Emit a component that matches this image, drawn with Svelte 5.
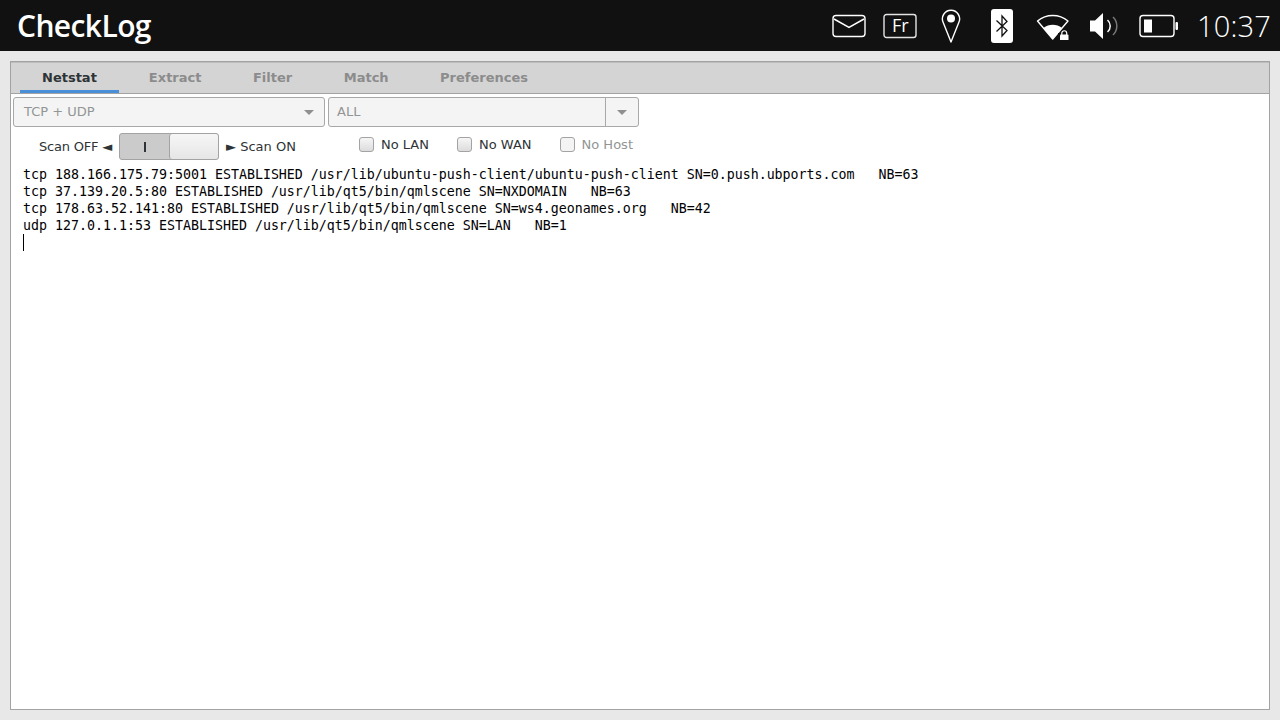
<script>
  const tabs = ["Netstat", "Extract", "Filter", "Match", "Preferences"];
  const lines = [
    "tcp 188.166.175.79:5001 ESTABLISHED /usr/lib/ubuntu-push-client/ubuntu-push-client SN=0.push.ubports.com   NB=63",
    "tcp 37.139.20.5:80 ESTABLISHED /usr/lib/qt5/bin/qmlscene SN=NXDOMAIN   NB=63",
    "tcp 178.63.52.141:80 ESTABLISHED /usr/lib/qt5/bin/qmlscene SN=ws4.geonames.org   NB=42",
    "udp 127.0.1.1:53 ESTABLISHED /usr/lib/qt5/bin/qmlscene SN=LAN   NB=1",
  ];
  const checks = [
    { label: "No LAN", disabled: false },
    { label: "No WAN", disabled: false },
    { label: "No Host", disabled: true },
  ];
</script>

<div class="screen">
  <header class="topbar">
    <span class="title">CheckLog</span>
    <div class="indicators">
      <svg class="ic-mail" width="34" height="24" viewBox="0 0 34 24" fill="none" stroke="#fff">
        <rect x="1" y="1.5" width="32" height="21" rx="3" stroke-width="1.4" />
        <path d="M2 5 L17 13.5 L32 5" stroke-width="1.5" />
      </svg>
      <svg class="ic-lang" width="34" height="26" viewBox="0 0 34 26" fill="none">
        <rect x="1" y="1.5" width="32" height="23" rx="2.5" stroke="#e4e4e4" stroke-width="1.4" />
        <text x="9" y="19" class="lang-text">Fr</text>
      </svg>
      <svg class="ic-pin" width="20" height="34" viewBox="0 0 20 34" fill="none">
        <path d="M10 33 L2.2 13.5 A8.6 8.6 0 1 1 17.8 13.5 Z" stroke="#fff" stroke-width="1.4" stroke-linejoin="round" />
        <circle cx="10" cy="9.5" r="4" fill="#fff" />
      </svg>
      <svg class="ic-bt" width="22" height="34" viewBox="0 0 22 34" fill="none">
        <rect width="22" height="34" rx="3" fill="#fff" />
        <path d="M5.5 11.5 L16 21.5 L11 27 L11 7 L16 12.5 L5.5 22.5" stroke="#111" stroke-width="1.3" />
      </svg>
      <svg class="ic-wifi" width="34" height="28" viewBox="0 0 34 28" fill="none">
        <path d="M1.5 9 A24 24 0 0 1 32 9 L16.7 27 Z" stroke="#fff" stroke-width="1.4" stroke-linejoin="round" />
        <path d="M7.5 16 A15 15 0 0 1 26 16 L16.7 27 Z" fill="#fff" />
        <rect x="22" y="21" width="12" height="8" fill="#111" />
        <rect x="24" y="22.5" width="8.5" height="6.5" rx="1" fill="#fff" />
        <path d="M25.8 23 V21.2 A2.4 2.4 0 0 1 30.7 21.2 V23" stroke="#fff" stroke-width="1.2" />
      </svg>
      <svg class="ic-vol" width="30" height="28" viewBox="0 0 30 28" fill="none">
        <path d="M0 8.5 H5 L13 1 V27 L5 19.5 H0 Z" fill="#fff" />
        <path d="M17.5 8 A8 8 0 0 1 17.5 20" stroke="#fff" stroke-width="1.5" />
        <path d="M23 5 A12.5 12.5 0 0 1 23 23" stroke="#777" stroke-width="1.5" />
      </svg>
      <svg class="ic-batt" width="40" height="24" viewBox="0 0 40 24" fill="none">
        <rect x="1" y="1.5" width="34" height="21" rx="3" stroke="#fff" stroke-width="1.4" />
        <rect x="5" y="5.5" width="8" height="13" fill="#fff" />
        <rect x="36.5" y="8" width="2.5" height="8" rx="1" fill="#fff" />
      </svg>
      <span class="clock">10:37</span>
    </div>
  </header>

  <main class="window">
    <nav class="tabs">
      {#each tabs as tab, i}
        <div class="tab" class:active={i === 0}>{tab}</div>
      {/each}
    </nav>

    <div class="combos">
      <div class="combo proto">
        <span>TCP + UDP</span>
        <i class="arrow"></i>
      </div>
      <div class="combo host">
        <span>ALL</span>
        <div class="combo-btn"><i class="arrow"></i></div>
      </div>
    </div>

    <div class="options">
      <div class="scan">
        <span class="off">Scan OFF ◄</span>
        <div class="switch">
          <div class="switch-off"><b></b></div>
          <div class="switch-thumb"></div>
        </div>
        <span>► Scan ON</span>
      </div>
      <div class="checks">
        {#each checks as c}
          <label class="check" class:disabled={c.disabled}>
            <span class="box"></span>{c.label}
          </label>
        {/each}
      </div>
    </div>

    <div class="log">
      {#each lines as line}
        <div class="line">{line}</div>
      {/each}
      <div class="line"><span class="caret"></span></div>
    </div>
  </main>
</div>

<style>
  :global(body) {
    margin: 0;
    background: #e8e8e8;
  }

  .screen {
    width: 1280px;
    height: 720px;
    display: flex;
    flex-direction: column;
    overflow: hidden;
    font-family: "DejaVu Sans", sans-serif;
    font-size: 13px;
    color: #2e3436;
  }

  .topbar {
    height: 51px;
    flex: none;
    background: #111;
    color: #fff;
    display: flex;
    align-items: center;
    justify-content: space-between;
    padding: 0 9px 0 17px;
  }

  .title {
    font-family: "Open Sans", sans-serif;
    font-size: 30px;
    font-weight: 600;
    letter-spacing: -0.6px;
  }

  .indicators {
    display: flex;
    align-items: center;
  }

  .indicators svg {
    display: block;
    flex: none;
  }

  .ic-mail { margin-right: 17px; }
  .ic-lang { margin-right: 24px; }
  .ic-pin { margin-right: 30px; }
  .ic-bt { margin-right: 23px; }
  .ic-wifi { margin-right: 20px; }
  .ic-vol { margin-right: 19px; }
  .ic-batt { margin-right: 18px; }

  .lang-text {
    font-family: "Open Sans", sans-serif;
    font-size: 18px;
    fill: #fff;
  }

  .clock {
    font-family: "Open Sans", sans-serif;
    font-size: 29px;
    font-weight: 300;
    letter-spacing: 0.2px;
  }

  .window {
    flex: 1;
    margin: 10px 10px 10px;
    background: #fff;
    border: 1px solid #a3a3a3;
    display: flex;
    flex-direction: column;
    min-height: 0;
  }

  .tabs {
    height: 31px;
    flex: none;
    background: #d4d4d4;
    border-bottom: 1px solid #a3a3a3;
    box-shadow: inset 0 1px #bdbdbd;
    display: flex;
    padding-left: 9px;
  }

  .tab {
    font-weight: 700;
    color: #8c8c8c;
    padding: 8px 22px 0;
    margin-right: 7.5px;
    box-sizing: border-box;
    height: 31px;
  }

  .tab.active {
    color: #2e3436;
    margin-right: 8px;
    border-bottom: 3px solid #4a90d9;
  }

  .combos {
    display: flex;
    gap: 3px;
    padding: 3px 0 0 2px;
  }

  .combo {
    box-sizing: border-box;
    height: 30px;
    background: #f4f4f4;
    border: 1px solid #a8a8a8;
    border-radius: 3px;
    color: #929595;
    display: flex;
    align-items: center;
    padding-left: 10px;
  }

  .combo span {
    margin-top: -1px;
  }

  .combo.proto {
    width: 312px;
    padding-right: 10px;
    justify-content: space-between;
  }

  .combo.host {
    width: 311px;
    padding-left: 8px;
    justify-content: space-between;
  }

  .combo-btn {
    width: 33px;
    height: 100%;
    border-left: 1px solid #a8a8a8;
    display: flex;
    align-items: center;
    justify-content: center;
    box-sizing: border-box;
  }

  .arrow {
    width: 0;
    height: 0;
    border-left: 5px solid transparent;
    border-right: 5px solid transparent;
    border-top: 5px solid #8f8f8f;
  }

  .options {
    display: flex;
    align-items: center;
    height: 32px;
    margin-top: 3px;
    padding-left: 28px;
  }

  .scan {
    display: flex;
    align-items: center;
    gap: 7px;
    width: 320px;
    padding-top: 1px;
  }

  .off {
    letter-spacing: -0.2px;
  }

  .switch {
    box-sizing: border-box;
    width: 100px;
    height: 27px;
    border: 1px solid #a3a3a3;
    border-radius: 3px;
    background: #cbcbcb;
    display: flex;
  }

  .switch-off {
    width: 49px;
    display: flex;
    align-items: center;
    justify-content: center;
  }

  .switch-off b {
    width: 2px;
    height: 10px;
    background: #2e3436;
  }

  .switch-thumb {
    flex: 1;
    border-left: 1px solid #a3a3a3;
    border-radius: 3px;
    background: linear-gradient(#f6f6f6, #e6e6e6);
  }

  .checks {
    display: flex;
    margin-top: -4px;
  }

  .check {
    display: flex;
    align-items: center;
    gap: 7px;
    margin-right: 28px;
  }

  .check.disabled {
    color: #929595;
  }

  .box {
    box-sizing: border-box;
    width: 15px;
    height: 15px;
    border: 1px solid #a3a3a3;
    border-radius: 3px;
    background: linear-gradient(#f6f6f6, #dcdcdc);
  }

  .check.disabled .box {
    background: #f4f4f4;
  }

  .log {
    padding: 4px 12px 0;
    font-family: "DejaVu Sans Mono", monospace;
    font-size: 13.29px;
    line-height: 17px;
    color: #000;
  }

  .line {
    height: 17px;
    white-space: pre;
  }

  .caret {
    display: inline-block;
    width: 1px;
    height: 17px;
    background: #000;
    vertical-align: top;
  }
</style>
